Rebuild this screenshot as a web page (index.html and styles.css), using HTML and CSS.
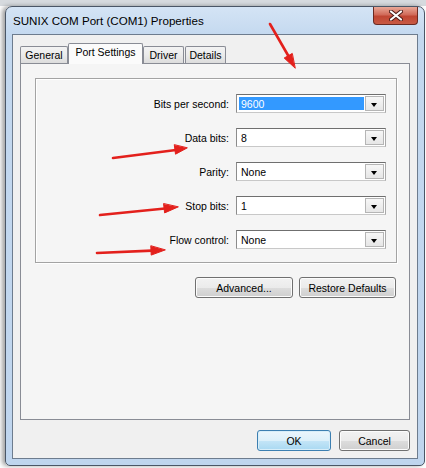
FILE: index.html
```html
<!DOCTYPE html>
<html lang="en">
<head>
  <meta charset="UTF-8" />
  <title>SUNIX COM Port (COM1) Properties</title>
  <link rel="stylesheet" href="styles.css">
</head>
<body>

  <div class="window">
    <div class="titlebar">
      <span class="title">SUNIX COM Port (COM1) Properties</span>
      <div class="close">
        <svg width="14" height="11" viewBox="0 0 14 11">
          <path d="M2 1.5 L12 9.5 M12 1.5 L2 9.5" stroke="#4a1a16" stroke-width="4" stroke-linecap="round"/>
          <path d="M2 1.5 L12 9.5 M12 1.5 L2 9.5" stroke="#fff" stroke-width="2.2" stroke-linecap="round"/>
        </svg>
      </div>
    </div>

    <div class="client">
      <div class="tabs">
        <div class="tab tab-general">General</div>
        <div class="tab tab-port active">Port Settings</div>
        <div class="tab tab-driver">Driver</div>
        <div class="tab tab-details">Details</div>
      </div>

      <div class="page">
        <div class="group">
          <div class="row">
            <label>Bits per second:</label>
            <div class="combo"><span class="value selected">9600</span><span class="drop"></span></div>
          </div>
          <div class="row">
            <label>Data bits:</label>
            <div class="combo"><span class="value">8</span><span class="drop"></span></div>
          </div>
          <div class="row">
            <label>Parity:</label>
            <div class="combo"><span class="value">None</span><span class="drop"></span></div>
          </div>
          <div class="row">
            <label>Stop bits:</label>
            <div class="combo"><span class="value">1</span><span class="drop"></span></div>
          </div>
          <div class="row">
            <label>Flow control:</label>
            <div class="combo"><span class="value">None</span><span class="drop"></span></div>
          </div>
        </div>

        <div class="page-buttons">
          <button class="btn btn-advanced">Advanced...</button>
          <button class="btn btn-restore">Restore Defaults</button>
        </div>
      </div>

      <div class="dialog-buttons">
        <button class="btn btn-ok">OK</button>
        <button class="btn btn-cancel">Cancel</button>
      </div>
    </div>
  </div>

  <!-- красные стрелки поверх окна -->
  <svg class="arrows" width="426" height="468" viewBox="0 0 426 468">
    <g stroke="#e3201c" stroke-width="2.6" stroke-linecap="round" fill="#e3201c">
      <line x1="270" y1="24" x2="289" y2="57"/>
      <polygon points="295,68 284.2,58 292,53.6" stroke-width="1"/>
      <line x1="113" y1="158" x2="176" y2="150"/>
      <polygon points="187,148 175.5,154.2 174.3,145" stroke-width="1"/>
      <line x1="100" y1="215" x2="165" y2="208.5"/>
      <polygon points="178,207 164.6,212.9 163.6,203.9" stroke-width="1"/>
      <line x1="97" y1="253" x2="152" y2="250.6"/>
      <polygon points="165,250 151.2,255.1 150.8,246.1" stroke-width="1"/>
    </g>
  </svg>

</body>
</html>
```

FILE: styles.css
```css
body {
  margin: 0;
  padding: 0;
  width: 426px;
  height: 468px;
  overflow: hidden;
  font-family: 'Liberation Sans', Arial, sans-serif;
  background: linear-gradient(#d6dade 0, #d6dade 6px, #fdfdfd 6px);
}
.window {
  box-sizing: border-box;
  width: 420px;
  margin: 6px 0 0 5px;
  padding: 0 6px 6px 6px;
  border: 1px solid #4a5666;
  border-radius: 7px 7px 5px 5px;
  background: linear-gradient(#d4e4f5, #c3d8ef 30px, #bfd5ee);
  box-shadow: -3px 0 4px rgba(0, 0, 0, 0.35);
}
.titlebar {
  height: 27px;
  display: flex;
  justify-content: space-between;
  align-items: center;
}
.title {
  padding-left: 1px;
  font-size: 11.6px;
  color: #000;
}
.close {
  align-self: flex-start;
  box-sizing: border-box;
  width: 45px;
  height: 18px;
  border: 1px solid #6a2a22;
  border-top: none;
  border-radius: 0 0 4px 4px;
  background: linear-gradient(#e9a897, #d16b5a 45%, #c04633 55%, #c85a44);
  display: flex;
  justify-content: center;
  align-items: center;
}
.client {
  padding: 8px 7px 7px 7px;
  border: 1px solid #6d7c8e;
  background: #f0f0f0;
  font-size: 10.5px;
}
.tabs {
  height: 20px;
  display: flex;
  align-items: flex-end;
}
.tab {
  box-sizing: border-box;
  height: 17px;
  border: 1px solid #898c95;
  border-bottom: none;
  border-radius: 2px 2px 0 0;
  background: linear-gradient(#f3f3f3, #ebebeb 50%, #dcdcdc);
  text-align: center;
  line-height: 16px;
  color: #000;
}
.tab-general { width: 48px; }
.tab-port { width: 75px; }
.tab-driver { width: 41px; }
.tab-details { width: 41px; margin-left: 1px; }
.tab.active {
  height: 21px;
  margin-bottom: -1px;
  background: #fbfbfb;
  line-height: 17px;
  position: relative;
  z-index: 1;
}
.page {
  box-sizing: border-box;
  height: 357px;
  padding: 14px 12px 0 14px;
  border: 1px solid #898c95;
  background: #f5f5f5;
}
.group {
  padding: 15px 10px 13px 0;
  border: 1px solid #a3a3a3;
  box-shadow: 1px 1px 0 #fff, inset 1px 1px 0 #fff;
  display: flex;
  flex-direction: column;
  gap: 15px;
}
.row {
  display: flex;
  justify-content: flex-end;
  align-items: center;
  height: 19px;
}
.row label {
  margin-right: 7px;
  color: #000;
}
.combo {
  box-sizing: border-box;
  width: 150px;
  height: 19px;
  padding: 1px;
  border: 1px solid #7a7a7a;
  border-color: #6f6f6f #a9a9a9 #c8c8c8 #8c8c8c;
  background: #fff;
  display: flex;
}
.value {
  flex: 1;
  margin: 1px 1px 1px 1px;
  padding-left: 2px;
  line-height: 14px;
  color: #000;
}
.value.selected {
  background: #3399ff;
  color: #fff;
}
.drop {
  position: relative;
  width: 17px;
  border: 1px solid #b5b5b5;
  background: linear-gradient(#f7f7f7, #e6e6e6);
}
.drop::after {
  content: "";
  position: absolute;
  left: 5px;
  top: 6px;
  border-left: 3.5px solid transparent;
  border-right: 3.5px solid transparent;
  border-top: 4px solid #000;
}
.btn {
  box-sizing: border-box;
  height: 21px;
  padding: 0;
  border: 1px solid #707070;
  border-radius: 3px;
  background: linear-gradient(#f2f2f2, #ebebeb 50%, #dddddd 51%, #cfcfcf);
  font-family: 'Liberation Sans', Arial, sans-serif;
  font-size: 10.5px;
  color: #000;
  box-shadow: inset 0 0 0 1px #fcfcfc;
}
.page-buttons {
  margin-top: 14px;
  display: flex;
  justify-content: flex-end;
  gap: 6px;
  padding-right: 1px;
}
.btn-advanced { width: 98px; }
.btn-restore { width: 97px; }
.dialog-buttons {
  margin-top: 10px;
  display: flex;
  justify-content: flex-end;
  gap: 8px;
}
.btn-ok {
  width: 74px;
  border-color: #3c7fb1;
  background: linear-gradient(#ebf6fc, #dcf0fa 50%, #c4e5f7 51%, #a9d9f2);
  box-shadow: inset 0 0 0 1px #d8eef9;
}
.btn-cancel { width: 71px; }
.arrows {
  position: absolute;
  left: 0;
  top: 0;
  pointer-events: none;
}
```
